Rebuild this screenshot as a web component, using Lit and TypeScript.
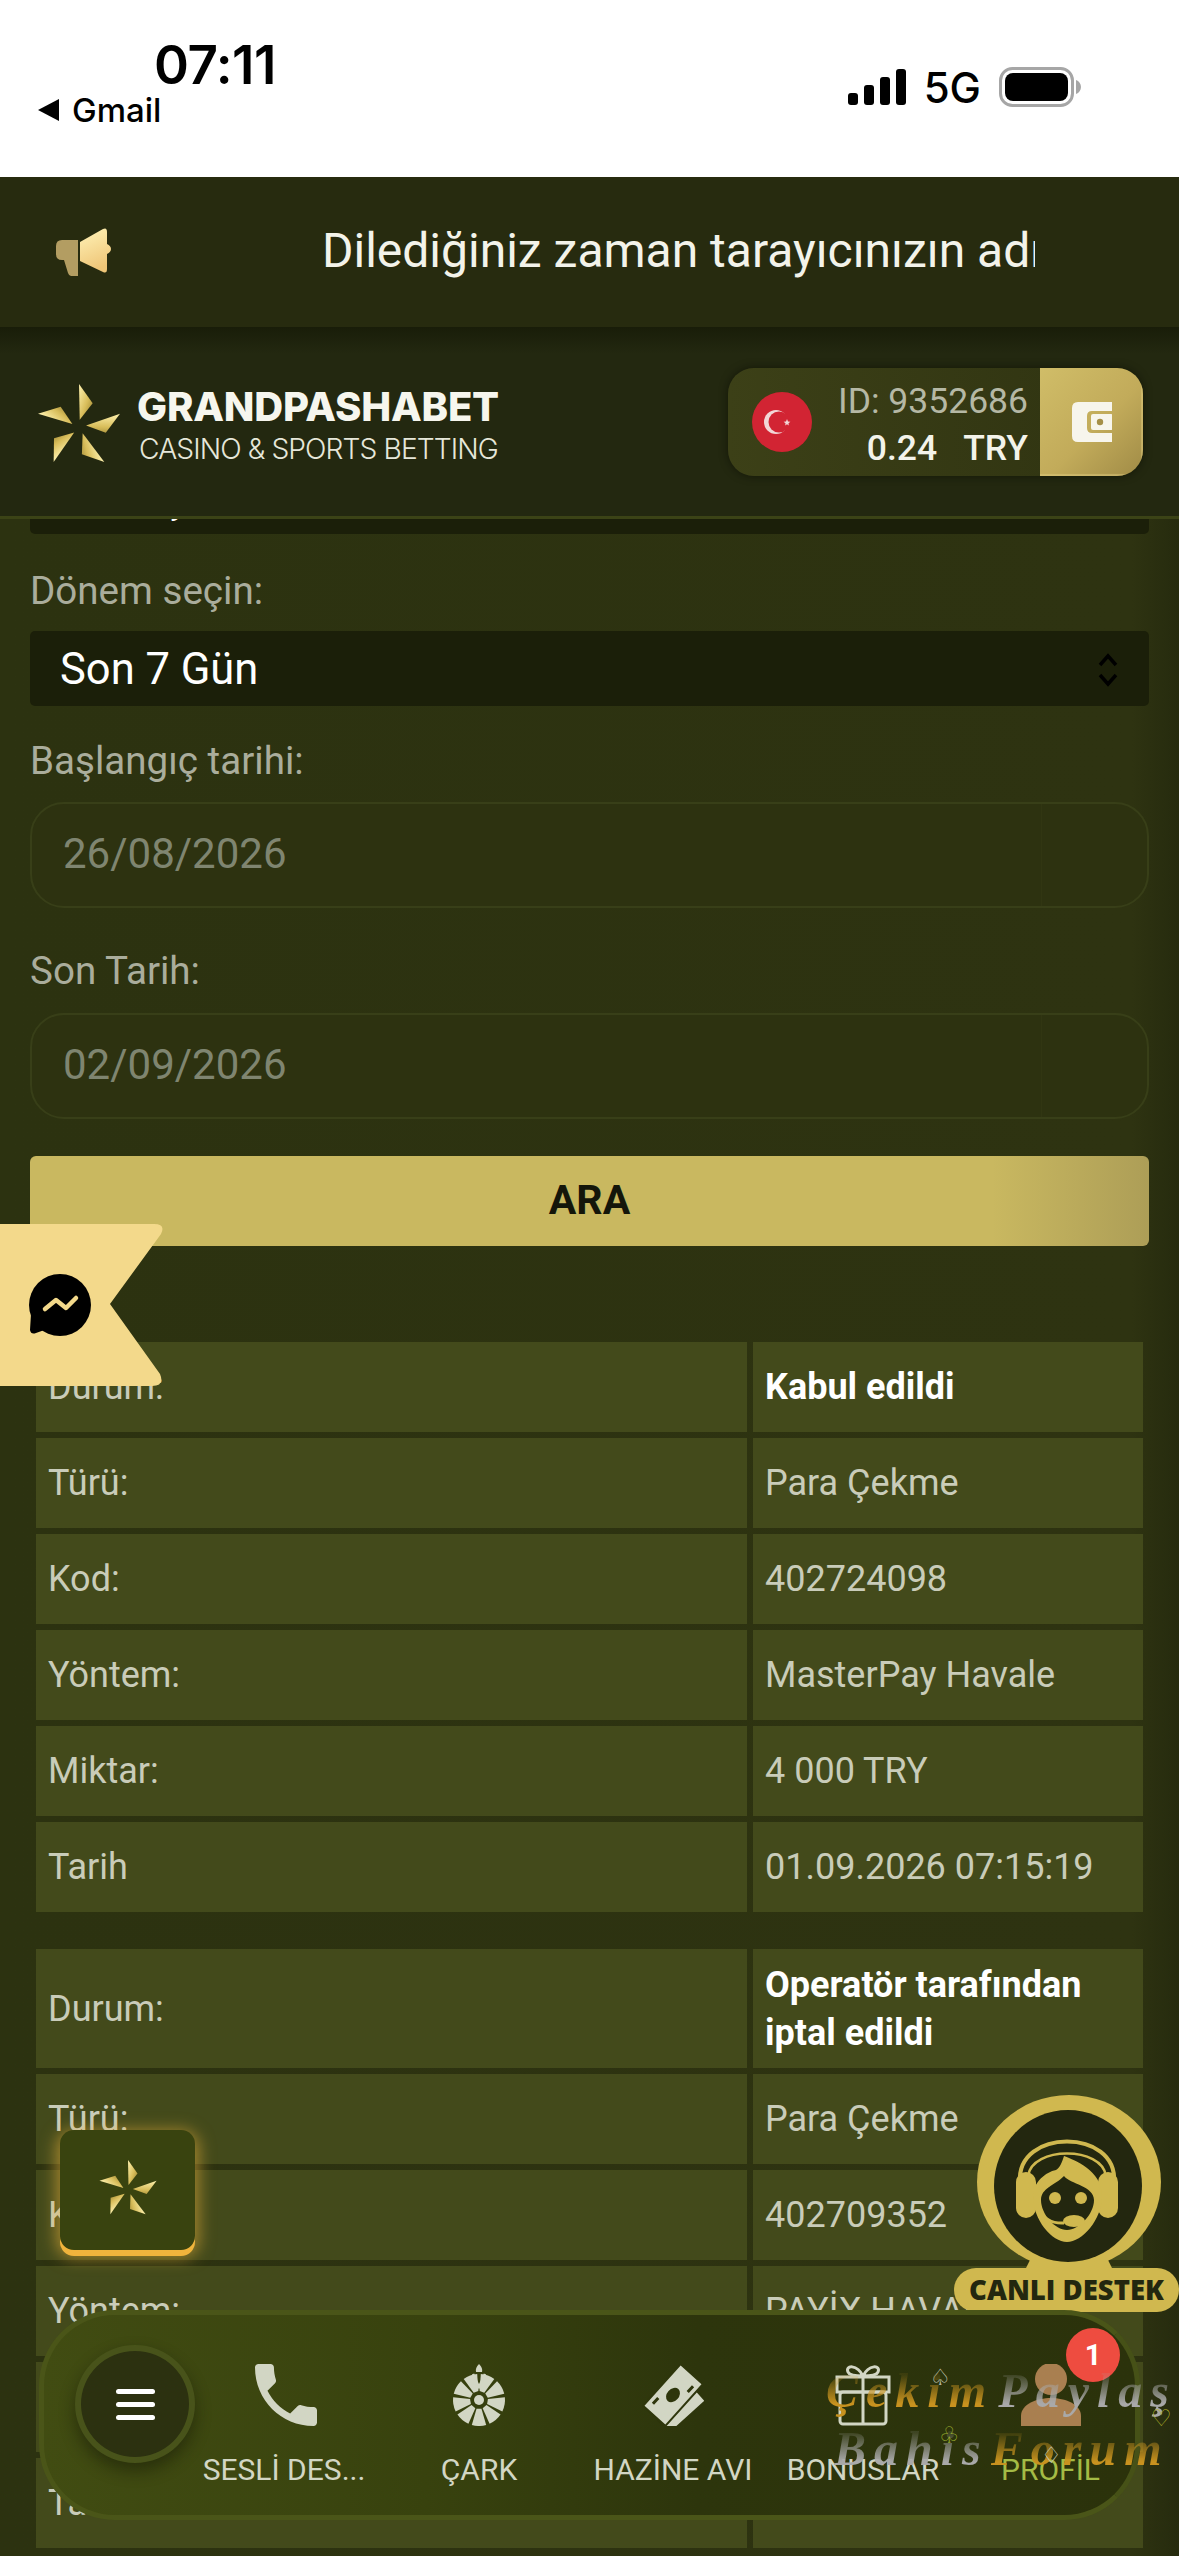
import { LitElement, html, css, svg } from 'lit';
import { customElement } from 'lit/decorators.js';

// five gold shards turning round the middle, same mark in the header and the float button
const pinwheel = (size: number, id: string) => html`
  <svg width=${size} height=${size} viewBox="-32 -32 64 64">
    <defs>
      <linearGradient id=${id} x1="0" y1="0" x2="1" y2="1">
        <stop offset="0" stop-color="#fff3b0"></stop>
        <stop offset="0.55" stop-color="#d8bd5a"></stop>
        <stop offset="1" stop-color="#8f7a2c"></stop>
      </linearGradient>
    </defs>
    ${[0, 72, 144, 216, 288].map(
      (a) => svg`<polygon points="0.5,-5 0,-30 9.5,-16.5" fill="url(#${id})" transform="rotate(${a})"></polygon>`
    )}
  </svg>
`;

// spin wheel: nine wedges, the gap at the top holds the pointer
const wheelSegments = () => {
  const out = [];
  const inner = 9;
  const outer = 26;
  const half = (16 * Math.PI) / 180;
  for (let i = 0; i < 9; i++) {
    const x1 = (Math.sin(half) * inner).toFixed(2);
    const y1 = (Math.cos(half) * inner).toFixed(2);
    const x2 = (Math.sin(half) * outer).toFixed(2);
    const y2 = (Math.cos(half) * outer).toFixed(2);
    out.push(
      svg`<path d="M-${x1} ${y1} L-${x2} ${y2} A${outer} ${outer} 0 0 0 ${x2} ${y2} L${x1} ${y1} Z" transform="rotate(${i * 40})"></path>`
    );
  }
  return out;
};

interface Row {
  label: string;
  value: string;
  strong?: boolean;
}

const firstRecord: Row[] = [
  { label: 'Durum:', value: 'Kabul edildi', strong: true },
  { label: 'Türü:', value: 'Para Çekme' },
  { label: 'Kod:', value: '402724098' },
  { label: 'Yöntem:', value: 'MasterPay Havale' },
  { label: 'Miktar:', value: '4 000 TRY' },
  { label: 'Tarih', value: '01.09.2026 07:15:19' },
];

const secondRecord: Row[] = [
  { label: 'Durum:', value: 'Operatör tarafından iptal edildi', strong: true },
  { label: 'Türü:', value: 'Para Çekme' },
  { label: 'Kod:', value: '402709352' },
  { label: 'Yöntem:', value: 'PAYİX HAVALE' },
  { label: 'Miktar:', value: '' },
  { label: 'Tarih', value: '' },
];

@customElement('app-root')
export class AppRoot extends LitElement {
  static styles = css`
    :host {
      display: flex;
      flex-direction: column;
      position: relative;
      width: 1179px;
      height: 2556px;
      overflow: hidden;
      background: linear-gradient(90deg, #2c3210 0, #2e3311 96%, #262b0e 100%);
      font-family: Roboto, 'Liberation Sans', sans-serif;
    }

    .status {
      flex: none;
      height: 177px;
      box-sizing: border-box;
      background: #fff;
      color: #000;
      display: flex;
      justify-content: space-between;
      font-family: Inter, 'Liberation Sans', sans-serif;
    }
    .status-left {
      padding: 34px 0 0 38px;
    }
    .time {
      margin-left: 116px;
      font-size: 53px;
      line-height: 62px;
      font-weight: 600;
      letter-spacing: -0.5px;
    }
    .back {
      display: flex;
      align-items: center;
      gap: 12px;
      font-size: 33px;
      line-height: 38px;
      font-weight: 500;
      margin-top: -5px;
    }
    .status-right {
      display: flex;
      align-items: center;
      gap: 18px;
      padding: 0 98px 0 0;
      height: 174px;
    }
    .net {
      font-size: 42px;
      font-weight: 500;
    }

    .banner {
      flex: none;
      height: 150px;
      background: #272b0f;
      display: flex;
      align-items: center;
      padding-left: 56px;
      box-sizing: border-box;
    }
    .ticker {
      margin: 0 0 3px 211px;
      width: 713px;
      overflow: hidden;
      white-space: nowrap;
      color: #f3f3ea;
      font-size: 48px;
      line-height: 60px;
    }

    .header {
      flex: none;
      height: 192px;
      box-sizing: border-box;
      background: linear-gradient(180deg, #191d09 0, #232810 14%, #232810 100%);
      border-bottom: 3px solid #3b4316;
      display: flex;
      align-items: center;
      justify-content: space-between;
      padding: 0 36px 0 33px;
    }
    .brand {
      display: flex;
      align-items: center;
      gap: 12px;
    }
    .brand svg {
      margin-top: 10px;
    }
    .brand-text {
      margin-top: 9px;
    }
    .brand-name {
      font-family: Inter, 'Open Sans', sans-serif;
      font-size: 40px;
      line-height: 44px;
      font-weight: 800;
      color: #f6f6ee;
      letter-spacing: -0.2px;
    }
    .brand-sub {
      font-family: Inter, 'Open Sans', sans-serif;
      font-size: 28.2px;
      line-height: 36px;
      font-weight: 300;
      color: #e6e7da;
      margin: 2px 0 0 2px;
      letter-spacing: -0.9px;
    }
    .account {
      display: flex;
      width: 415px;
      height: 108px;
      border-radius: 26px;
      overflow: hidden;
      background: linear-gradient(90deg, #3c4017 0, #2f3311 100%);
      box-shadow: 0 0 8px rgba(10, 12, 2, 0.6);
    }
    .flag {
      margin: 24px 0 0 24px;
      flex: none;
    }
    .account-text {
      flex: 1;
      text-align: right;
      padding: 10px 12px 0 0;
      font-size: 35.5px;
      line-height: 47px;
      white-space: nowrap;
    }
    .account-id {
      color: #b5b8a5;
    }
    .account-sum {
      color: #f3f3ea;
      font-weight: 500;
      display: flex;
      justify-content: flex-end;
      gap: 26px;
    }
    .wallet {
      flex: none;
      width: 103px;
      display: flex;
      align-items: center;
      justify-content: center;
      background: linear-gradient(135deg, #d0bd68 0, #c2ab5a 55%, #a08b46 100%);
      box-shadow: inset -2px -2px 1px rgba(225, 205, 130, 0.5);
    }

    main {
      flex: 1;
      min-height: 0;
      overflow: hidden;
      padding: 0 30px;
    }
    .form {
      margin-top: -60px;
      display: flex;
      flex-direction: column;
    }
    .select {
      height: 75px;
      flex: none;
      box-sizing: border-box;
      padding: 2px 30px 0;
      border-radius: 5px;
      background: #1b1f09;
      color: #fff;
      font-size: 43.5px;
      display: flex;
      align-items: center;
      justify-content: space-between;
    }
    label {
      font-size: 38.6px;
      line-height: 42px;
      color: #aaad9c;
    }
    .l-period {
      margin: 36px 0 19px;
    }
    .l-start {
      margin: 34px 0 20px;
    }
    .l-end {
      margin: 42px 0 21px;
    }
    .date {
      height: 106px;
      flex: none;
      box-sizing: border-box;
      border: 2px solid #383f18;
      border-radius: 34px;
      background: #2d3210;
      color: #7f8570;
      font-size: 42px;
      display: flex;
      align-items: center;
      padding-left: 31px;
    }
    .date-end {
      flex: 1;
      padding-bottom: 4px;
    }
    .date-cap {
      width: 105px;
      height: 100%;
      border-left: 1px solid #33391499;
    }
    .search {
      margin-top: 37px;
      height: 90px;
      box-sizing: border-box;
      padding-bottom: 2px;
      border-radius: 6px;
      background: linear-gradient(90deg, #c9b860 0, #c9b860 86%, #ad9e57 100%);
      color: #14160a;
      font-size: 41px;
      font-weight: 700;
      display: flex;
      align-items: center;
      justify-content: center;
    }

    .records {
      margin-top: 90px;
      display: flex;
      flex-direction: column;
      gap: 25px;
    }
    table {
      width: 100%;
      border-collapse: separate;
      border-spacing: 6px;
      table-layout: fixed;
    }
    td {
      background: #434a1b;
      color: #c9ccb9;
      font-size: 36px;
      line-height: 48px;
      height: 90px;
      padding: 0 12px;
      box-sizing: border-box;
    }
    td:first-child {
      width: 711px;
    }
    td.strong {
      color: #fff;
      font-weight: 700;
      height: 119px;
    }
    td.strong.one {
      height: 90px;
    }

    /* things floating over the scrolled page */
    .chat-tab {
      position: absolute;
      left: 0;
      top: 1224px;
      width: 164px;
      height: 162px;
    }
    .float-star {
      position: absolute;
      left: 60px;
      top: 2130px;
      width: 135px;
      height: 120px;
      border-radius: 14px;
      background: #39430f;
      display: flex;
      align-items: center;
      justify-content: center;
      box-shadow: 0 6px 0 #f0b43c, 0 4px 16px 4px rgba(240, 180, 60, 0.55);
    }
    .support {
      position: absolute;
      left: 954px;
      top: 2092px;
      width: 225px;
      height: 220px;
    }
    .support svg {
      display: block;
    }
    .support span {
      position: absolute;
      left: 0;
      right: 0;
      bottom: 0;
      height: 44px;
      border-radius: 22px;
      background: #d0b84f;
      color: #23270f;
      font-size: 27.5px;
      font-weight: 800;
      line-height: 44px;
      text-align: center;
      white-space: nowrap;
      font-family: 'Open Sans', sans-serif;
    }

    .nav {
      position: absolute;
      left: 39px;
      top: 2310px;
      width: 1101px;
      height: 210px;
      box-sizing: border-box;
      border: 5px solid #4a5518;
      border-right-color: #465117;
      border-radius: 76px;
      background: linear-gradient(90deg, #414c12 0, #38420e 35%, #2d350c 60%, #2b320b 100%);
      display: grid;
      grid-template-columns: 143px 194px 196px 192px 188px 187px;
      align-items: start;
    }
    .menu {
      margin: 30px 0 0 31px;
      width: 120px;
      height: 118px;
      box-sizing: border-box;
      border: 6px solid #48531a;
      border-radius: 50%;
      background: #2c3110;
      display: flex;
      flex-direction: column;
      align-items: center;
      justify-content: center;
      gap: 8px;
      box-shadow: 0 8px 16px rgba(15, 18, 4, 0.45);
      position: relative;
      z-index: 1;
    }
    .menu i {
      display: block;
      width: 39px;
      height: 5px;
      border-radius: 3px;
      background: #fff;
    }
    .item {
      padding-top: 49px;
      display: flex;
      flex-direction: column;
      align-items: center;
      color: #d2d6c4;
      font-size: 30px;
      line-height: 36px;
      white-space: nowrap;
      position: relative;
    }
    .item svg {
      height: 62px;
      display: block;
    }
    .item span {
      margin-top: 26px;
    }
    .item svg.phone {
      margin-left: 4px;
    }
    .item.active {
      color: #a4bb45;
    }
    .badge {
      position: absolute;
      left: 1066px;
      top: 2328px;
      width: 54px;
      height: 54px;
      border-radius: 50%;
      background: #ee4c40;
      color: #fff;
      font-size: 29px;
      font-weight: 700;
      display: flex;
      align-items: center;
      justify-content: center;
    }

    .mark {
      position: absolute;
      left: 826px;
      top: 2362px;
      width: 353px;
      pointer-events: none;
      font-family: 'Liberation Serif', serif;
      font-style: italic;
      font-weight: 700;
      font-size: 48px;
      line-height: 58px;
      letter-spacing: 8px;
    }
    .mark-row {
      display: flex;
      justify-content: space-between;
      white-space: nowrap;
    }
    .mark-row.low {
      margin-left: 8px;
      width: 330px;
    }
    .mark b {
      padding-right: 2px;
      color: transparent;
      -webkit-background-clip: text;
      background-clip: text;
    }
    .gold {
      background-image: linear-gradient(180deg, rgba(200, 150, 40, 0.1) 22%, #c8921f 72%);
    }
    .grey {
      background-image: linear-gradient(180deg, rgba(170, 170, 170, 0.15) 22%, #a9a9a9 72%);
    }
    .suit {
      position: absolute;
      font-family: 'DejaVu Sans', sans-serif;
      font-style: normal;
      font-weight: 400;
      font-size: 23px;
      line-height: 24px;
      letter-spacing: 0;
      color: #c9cdb8;
    }
    .s1 {
      left: 104px;
      top: 3px;
    }
    .s2 {
      left: 113px;
      top: 61px;
      color: #9eb02f;
    }
    .s3 {
      left: 215px;
      top: 81px;
    }
    .s4 {
      left: 325px;
      top: 44px;
      color: #b8b82a;
    }
  `;

  private renderRecord(rows: Row[], single = false) {
    return html`
      <table>
        ${rows.map(
          (r) => html`
            <tr>
              <td>${r.label}</td>
              <td class=${r.strong ? (single ? 'strong one' : 'strong') : ''}>${r.value}</td>
            </tr>
          `
        )}
      </table>
    `;
  }

  render() {
    return html`
      <div class="status">
        <div class="status-left">
          <div class="time">07:11</div>
          <div class="back">
            <svg width="22" height="22" viewBox="0 0 22 22"><path d="M21 0V22L0 11Z" fill="#000"></path></svg>
            Gmail
          </div>
        </div>
        <div class="status-right">
          <svg width="58" height="36" viewBox="0 0 58 36" fill="#000">
            <rect x="0" y="24" width="10" height="12" rx="3"></rect>
            <rect x="16" y="16" width="10" height="20" rx="3"></rect>
            <rect x="32" y="8" width="10" height="28" rx="3"></rect>
            <rect x="48" y="0" width="10" height="36" rx="3"></rect>
          </svg>
          <span class="net">5G</span>
          <svg width="82" height="40" viewBox="0 0 82 40">
            <rect x="1.5" y="1.5" width="72" height="37" rx="12" fill="none" stroke="#a6a6a6" stroke-width="3"></rect>
            <rect x="6" y="6" width="63" height="28" rx="8" fill="#000"></rect>
            <path d="M77 13c3 1 5 4 5 7s-2 6-5 7z" fill="#a6a6a6"></path>
          </svg>
        </div>
      </div>

      <div class="banner">
        <svg width="55" height="50" viewBox="0 0 55 50">
          <defs>
            <linearGradient id="horn" x1="0" y1="0" x2="0.3" y2="1">
              <stop offset="0" stop-color="#fff3b8"></stop>
              <stop offset="1" stop-color="#efc678"></stop>
            </linearGradient>
          </defs>
          <path d="M6 13H22V49H15Q13 49 12 46L8 33H6Q0 33 0 27V19Q0 13 6 13Z" fill="#b39d62"></path>
          <path d="M24 15 47 2Q51 0 51 5V17Q55 19 55 22T51 27V42Q51 47 47 45L24 34Z" fill="url(#horn)"></path>
        </svg>
        <div class="ticker">Dilediğiniz zaman tarayıcınızın adres çubuğuna</div>
      </div>

      <div class="header">
        <div class="brand">
          ${pinwheel(92, 'gold-a')}
          <div class="brand-text">
            <div class="brand-name">GRANDPASHABET</div>
            <div class="brand-sub">CASINO &amp; SPORTS BETTING</div>
          </div>
        </div>
        <div class="account">
          <svg class="flag" width="60" height="60" viewBox="0 0 60 60">
            <circle cx="30" cy="30" r="30" fill="#d22433"></circle>
            <circle cx="24" cy="30" r="12" fill="#f2d6d6"></circle>
            <circle cx="27" cy="30" r="10.5" fill="#d22433"></circle>
            <polygon points="35,27 36,29.4 38.4,29.8 36.5,31.2 36.8,33.6 35,32.2 33.2,33.6 33.5,31.2 31.6,29.8 34,29.4" fill="#f2d6d6"></polygon>
          </svg>
          <div class="account-text">
            <div class="account-id">ID: 9352686</div>
            <div class="account-sum"><span>0.24</span><span>TRY</span></div>
          </div>
          <div class="wallet">
            <svg width="40" height="40" viewBox="0 0 40 40">
              <path d="M6 0H40V9H20Q15 9 15 14V26Q15 31 20 31H40V40H6Q0 40 0 34V6Q0 0 6 0Z" fill="#f7f5ec"></path>
              <rect x="19" y="12" width="22" height="16" rx="2" fill="#f7f5ec"></rect>
              <circle cx="28" cy="20" r="3.2" fill="#a58f48"></circle>
            </svg>
          </div>
        </div>
      </div>

      <main>
        <div class="form">
          <div class="select">Para Çekme</div>
          <label class="l-period">Dönem seçin:</label>
          <div class="select">
            Son 7 Gün
            <svg width="22" height="34" viewBox="0 0 22 34" fill="none" stroke="#000" stroke-width="3.5">
              <path d="M3 12 11 3 19 12"></path>
              <path d="M3 22 11 31 19 22"></path>
            </svg>
          </div>
          <label class="l-start">Başlangıç tarihi:</label>
          <div class="date"><span class="date-end">26/08/2026</span><span class="date-cap"></span></div>
          <label class="l-end">Son Tarih:</label>
          <div class="date"><span class="date-end">02/09/2026</span><span class="date-cap"></span></div>
          <div class="search">ARA</div>
        </div>
        <div class="records">
          ${this.renderRecord(firstRecord, true)}
          ${this.renderRecord(secondRecord)}
        </div>
      </main>

      <svg class="chat-tab" viewBox="0 0 164 162">
        <path d="M0 0H154Q166 0 161 10L110 80 160 150Q165 162 152 162H0Z" fill="#f3d98b"></path>
        <circle cx="60" cy="81" r="31" fill="#000"></circle>
        <path d="M31 90 30 106Q31 111 36 109L50 104Z" fill="#000"></path>
        <path d="M45 85 56 76 66 84 76 74" fill="none" stroke="#f3d98b" stroke-width="4.5" stroke-linecap="round" stroke-linejoin="round"></path>
      </svg>

      <div class="float-star">${pinwheel(64, 'gold-b')}</div>

      <div class="support">
        <svg width="225" height="190" viewBox="0 0 225 190">
          <ellipse cx="115" cy="90" rx="92" ry="87" fill="#d0b84f"></ellipse>
          <path d="M80 160H150L165 190H65Z" fill="#d0b84f"></path>
          <ellipse cx="114" cy="94" rx="74" ry="76" fill="#23270f"></ellipse>
          <path d="M66 90C62 36 164 36 160 90" fill="none" stroke="#d0b84f" stroke-width="4"></path>
          <path d="M74 84C78 54 148 54 152 84" fill="none" stroke="#d0b84f" stroke-width="2.5"></path>
          <rect x="62" y="80" width="20" height="46" rx="10" fill="#d0b84f"></rect>
          <rect x="144" y="80" width="20" height="46" rx="10" fill="#d0b84f"></rect>
          <path d="M110 64C120 68 148 78 148 104 148 128 128 150 113 150 98 150 79 128 79 104 79 90 92 80 102 78 106 76 108 70 110 64Z" fill="#d0b84f"></path>
          <path d="M110 84C116 92 140 94 140 108 140 122 125 138 113 138 101 138 87 122 87 108 87 96 100 94 110 84Z" fill="#23270f"></path>
          <circle cx="101" cy="106" r="6" fill="#d0b84f"></circle>
          <circle cx="127" cy="106" r="6" fill="#d0b84f"></circle>
          <ellipse cx="120" cy="129" rx="11" ry="6" fill="#d0b84f"></ellipse>
          <path d="M86 118Q92 132 110 131" fill="none" stroke="#d0b84f" stroke-width="3"></path>
        </svg>
        <span>CANLI DESTEK</span>
      </div>

      <nav class="nav">
        <div class="menu"><i></i><i></i><i></i></div>
        <div class="item">
          <svg class="phone" width="62" viewBox="3 3 18 18" fill="#d2d6c4">
            <path d="M6.62 10.79c1.44 2.83 3.76 5.14 6.59 6.59l2.2-2.2c.27-.27.67-.36 1.02-.24 1.12.37 2.33.57 3.57.57.55 0 1 .45 1 1V20c0 .55-.45 1-1 1-9.39 0-17-7.61-17-17 0-.55.45-1 1-1h3.5c.55 0 1 .45 1 1 0 1.25.2 2.45.57 3.57.11.35.03.74-.25 1.02l-2.2 2.2z"></path>
          </svg>
          <span>SESLİ DES...</span>
        </div>
        <div class="item">
          <svg width="62" viewBox="-31 -31 62 62" fill="#d2d6c4">
            <g transform="translate(0 5)">${wheelSegments()}</g>
            <circle cx="0" cy="5" r="5"></circle>
            <path d="M0 -31Q4 -27 3 -23H-3Q-4 -27 0 -31Z"></path>
            <path d="M-6 -21 0 -8 6 -21" fill="none" stroke="#d2d6c4" stroke-width="2.5"></path>
          </svg>
          <span>ÇARK</span>
        </div>
        <div class="item">
          <svg width="62" viewBox="-31 -31 62 62">
            <rect x="-26" y="-11" width="48" height="28" fill="#d2d6c4" stroke="#2e360c" stroke-width="2" transform="translate(5 8) rotate(-42)"></rect>
            <rect x="-28" y="-15" width="56" height="30" fill="#d2d6c4" stroke="#2e360c" stroke-width="2" transform="rotate(-48)"></rect>
            <ellipse cx="0" cy="0" rx="8" ry="6" fill="#2e360c" transform="rotate(-48)"></ellipse>
            <path d="M-20 -9H-12M12 9H20" stroke="#2e360c" stroke-width="3" transform="rotate(-48)"></path>
          </svg>
          <span>HAZİNE AVI</span>
        </div>
        <div class="item">
          <svg width="56" viewBox="0 0 56 62" fill="none" stroke="#d2d6c4" stroke-width="3">
            <rect x="2" y="13" width="52" height="15"></rect>
            <rect x="5" y="28" width="46" height="32" rx="3"></rect>
            <path d="M28 13V60"></path>
            <path d="M28 12C22 0 10 1 13 8 14 11 22 12 28 12ZM28 12C34 0 46 1 43 8 42 11 34 12 28 12Z"></path>
          </svg>
          <span>BONUSLAR</span>
        </div>
        <div class="item active">
          <svg width="62" viewBox="0 0 62 62" fill="#a97f50">
            <circle cx="31" cy="15" r="16"></circle>
            <path d="M1 62V52C1 40 17 34 31 34S61 40 61 52V62Z"></path>
          </svg>
          <span>PROFİL</span>
        </div>
      </nav>
      <div class="badge">1</div>

      <div class="mark">
        <div class="mark-row"><b class="gold">Çekim</b><b class="grey">Paylaş</b></div>
        <div class="mark-row low"><b class="grey">Bahis</b><b class="gold">Forum</b></div>
        <span class="suit s1">♤</span>
        <span class="suit s2">♧</span>
        <span class="suit s3">♢</span>
        <span class="suit s4">♡</span>
      </div>
    `;
  }
}
